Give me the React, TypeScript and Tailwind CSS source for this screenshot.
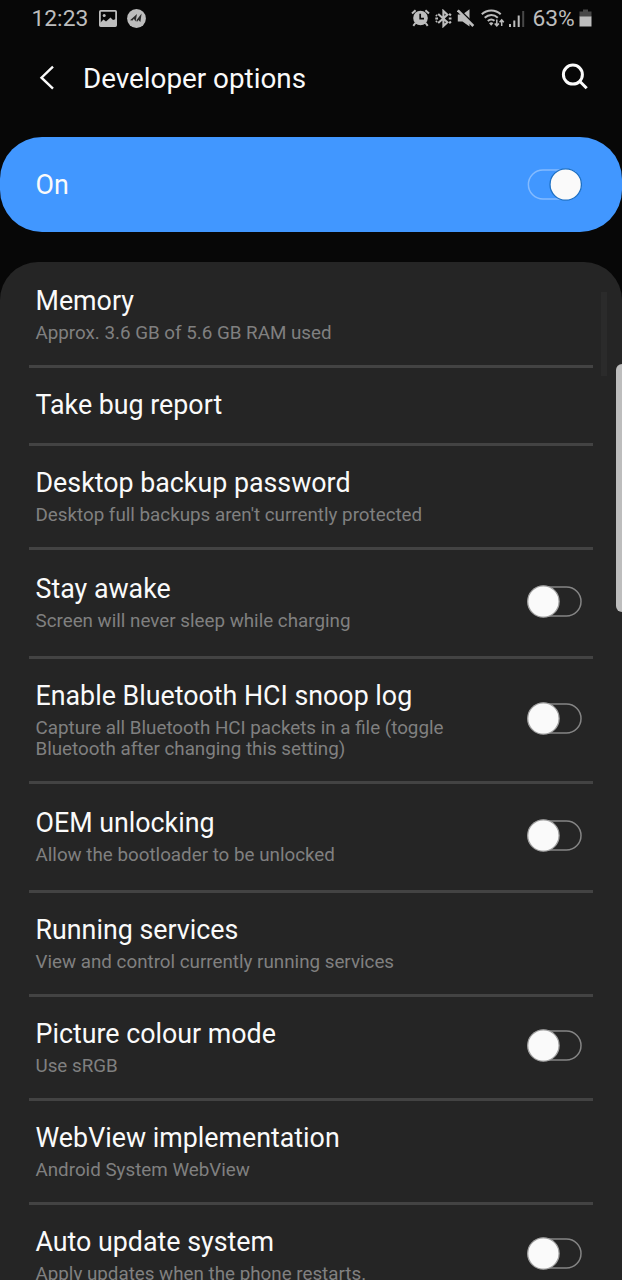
import React, { useState } from 'react'
import clsx from 'clsx'

type Option = {
    title: string
    summary?: string
    toggle?: boolean
    height: string
}

const options: Option[] = [
    { title: 'Memory', summary: 'Approx. 3.6 GB of 5.6 GB RAM used', height: 'h-[106px] pb-[2px]' },
    { title: 'Take bug report', height: 'h-[78px]' },
    { title: 'Desktop backup password', summary: "Desktop full backups aren't currently protected", height: 'h-[104px] pb-[4px]' },
    { title: 'Stay awake', summary: 'Screen will never sleep while charging', toggle: true, height: 'h-[109px] pb-[4px]' },
    { title: 'Enable Bluetooth HCI snoop log', summary: 'Capture all Bluetooth HCI packets in a file (toggle Bluetooth after changing this setting)', toggle: true, height: 'h-[125px] pb-[4px]' },
    { title: 'OEM unlocking', summary: 'Allow the bootloader to be unlocked', toggle: true, height: 'h-[109px] pb-[4px]' },
    { title: 'Running services', summary: 'View and control currently running services', height: 'h-[104px] pb-[4px]' },
    { title: 'Picture colour mode', summary: 'Use sRGB', toggle: true, height: 'h-[104px] pb-[4px]' },
    { title: 'WebView implementation', summary: 'Android System WebView', height: 'h-[104px] pb-[4px]' },
    { title: 'Auto update system', summary: 'Apply updates when the phone restarts.', toggle: true, height: 'h-[104px] pb-[4px]' },
]

const StatusBar: React.FC = () => (
    <div className="flex h-[37px] items-center justify-between pl-[31.5px] pr-[30px] text-[#bdbdbd]">
        <div className="flex items-center">
            <span className="w-[67px] text-[22.8px] leading-[34px]">12:23</span>
            <svg width="18" height="17" viewBox="0 0 18 17" fill="none" stroke="currentColor" strokeWidth="1.8">
                <rect x="0.9" y="0.9" width="16.2" height="15.2" rx="0.8" />
                <circle cx="5.2" cy="5.5" r="1.5" fill="currentColor" stroke="none" />
                <path d="M1 13 4.5 9.5 7 11.5 11.5 7.5 14 10 17 9V16H1Z" fill="currentColor" stroke="none" />
            </svg>
            <svg className="ml-[10px]" width="19" height="19" viewBox="0 0 19 19">
                <circle cx="9.5" cy="9.5" r="9.4" fill="currentColor" />
                <path d="M3 11.2 10 5 8.6 12.4 6.9 9.8 5.6 11.6Z" fill="#2b2b2b" />
                <path d="M9.4 11.3 14.6 4.6 13.4 13 11.4 11 9.9 12.9Z" fill="#2b2b2b" />
            </svg>
        </div>
        <div className="flex items-center">
            {/* alarm */}
            <svg className="mb-px" width="19" height="18" viewBox="0 0 19 18" fill="none" stroke="currentColor">
                <circle cx="9.5" cy="9" r="7.3" fill="currentColor" stroke="none" />
                <path d="M1 4.6 4.6 1.2M18 4.6 14.4 1.2M4.4 14 2.3 16.8M14.6 14 16.7 16.8" strokeWidth="2" />
                <path d="M9.2 4.8V9.6H13" stroke="#0a0a0a" strokeWidth="1.7" />
            </svg>
            {/* bluetooth */}
            <svg className="mb-px ml-[4.5px]" width="17" height="19" viewBox="0 0 17 19" fill="none" stroke="currentColor" strokeWidth="2.1">
                <path d="M3.2 5 12.4 13.2 8.4 17V2L12.4 5.8 3.2 14" />
                <path d="M0.3 9.5H3M13.8 9.5H16.5M14.2 4.8 15.9 6.5M14.2 14.2 15.9 12.5M1 6 2 7M1 13 2 12" />
            </svg>
            {/* mute */}
            <svg className="mb-px ml-[5px]" width="18" height="18" viewBox="0 0 18 18">
                <path d="M0.8 5.5H5.5L12.5 0.3V17.5L5.5 12.5H0.8Z" fill="currentColor" />
                <path d="M2.5 1 17.5 15.5" stroke="#0a0a0a" strokeWidth="1.8" />
                <path d="M0.8 1.3 16.3 17" stroke="currentColor" strokeWidth="2.6" />
            </svg>
            {/* wifi with traffic arrows */}
            <svg className="ml-[6.5px]" width="24" height="19" viewBox="0 0 24 19" fill="none" stroke="currentColor" strokeWidth="2">
                <path d="M0.8 5.3C6 0.2 14.5 0.2 19.7 5.3M3.7 8.7C7.6 5 13 5 16.8 8.7M6.8 11.9C9.1 10 11.4 10 13.5 11.8" />
                <path d="M8 14.2C9.5 13 11 13 12.4 14.2L10.2 16.7Z" fill="currentColor" stroke="none" />
                <path d="M15.8 10.5V16.5M13.7 14.5 15.8 16.8 17.9 14.5M20.7 17V11M18.6 13.2 20.7 10.9 22.8 13.2" strokeWidth="1.5" />
            </svg>
            {/* signal */}
            <svg className="ml-[4px]" width="17" height="18" viewBox="0 0 17 18" fill="currentColor">
                <rect x="0" y="14" width="2" height="3" />
                <rect x="4.3" y="10.5" width="2" height="6.5" />
                <rect x="8.7" y="5.5" width="2" height="11.5" />
                <rect x="13.2" y="1" width="2" height="16" fill="#484848" />
            </svg>
            <span className="ml-[6.5px] w-[46.5px] text-[22.8px] leading-[34px]">63%</span>
            {/* battery */}
            <svg className="mb-[2px]" width="13" height="18" viewBox="0 0 13 18">
                <path d="M4 0.5H9V2.5H12.5V8H0.5V2.5H4Z" fill="#484848" />
                <rect x="0.5" y="7.5" width="12" height="10" fill="currentColor" />
            </svg>
        </div>
    </div>
)

const Toggle: React.FC<{ checked: boolean; onChange: () => void; label: string }> = ({ checked, onChange, label }) => (
    <button
        type="button"
        role="switch"
        aria-checked={checked}
        aria-label={label}
        onClick={onChange}
        className="flex h-[33px] w-[55px] shrink-0 items-center"
    >
        <svg width="55" height="33" viewBox="0 0 55 33" fill="none">
            <rect x="1.4" y="1.9" width="52.6" height="29.2" rx="14.6" stroke={checked ? '#84bbff' : '#858585'} strokeWidth="1.5" />
            <circle cx={checked ? 38.7 : 16.4} cy="16.5" r="15.7" fill="#fafafa" stroke={checked ? '#1d70c4' : '#a0a0a0'} strokeWidth="1.3" />
        </svg>
    </button>
)

const App: React.FC = () => {
    const [enabled, setEnabled] = useState(true)
    const [active, setActive] = useState<Record<string, boolean>>({})

    return (
        <div className="relative h-[1280px] w-[622px] overflow-hidden bg-[#070707] font-[Roboto,sans-serif] text-[#fafafa]">
            <StatusBar />

            <header className="flex h-[100px] items-start justify-between pl-[39px] pr-[34px] pt-[20px]">
                <div className="flex items-center">
                    <svg width="16" height="26" viewBox="0 0 16 26" fill="none" stroke="currentColor" strokeWidth="2.4">
                        <path d="M14 1.7 2.5 12.7 14 23.7" />
                    </svg>
                    <h1 className="ml-[28px] pt-[2px] text-[27.8px] leading-[40px]">Developer options</h1>
                </div>
                <svg className="mt-[6px]" width="28" height="28" viewBox="0 0 28 28" fill="none" stroke="currentColor" strokeWidth="3">
                    <circle cx="12.9" cy="11.6" r="9.5" />
                    <path d="M19.7 18.3 26.7 25.3" />
                </svg>
            </header>

            <div className="flex h-[95px] items-center justify-between rounded-[42px] bg-[#4197ff] pl-[35.5px] pr-10">
                <span className="pt-[2px] text-[26.8px]">On</span>
                <Toggle checked={enabled} onChange={() => setEnabled(!enabled)} label="Developer options" />
            </div>

            <main className="mt-[30px] rounded-t-[38px] bg-[#252525] px-[29px]">
                {options.map(option => (
                    <div
                        key={option.title}
                        className={clsx('flex items-center justify-between border-b-[3px] border-[#434343] pl-[6.5px] pr-[11px]', option.height)}
                    >
                        <div className="max-w-[450px]">
                            <h2 className="mb-[2px] text-[26.8px] leading-[40px]">{option.title}</h2>
                            {option.summary && <p className="text-[18.8px] leading-[21.5px] text-[#808080]">{option.summary}</p>}
                        </div>
                        {option.toggle && (
                            <Toggle
                                checked={!!active[option.title]}
                                onChange={() => setActive({ ...active, [option.title]: !active[option.title] })}
                                label={option.title}
                            />
                        )}
                    </div>
                ))}
            </main>

            {/* scrollbar and edge panel handle */}
            <div className="absolute right-[15px] top-[292px] h-[84px] w-[6px] bg-[#2b2b2b]"></div>
            <div className="absolute right-0 top-[364px] h-[248px] w-[6px] rounded-l-[6px] bg-[#bdbdbd]"></div>
        </div>
    )
}

export default App
